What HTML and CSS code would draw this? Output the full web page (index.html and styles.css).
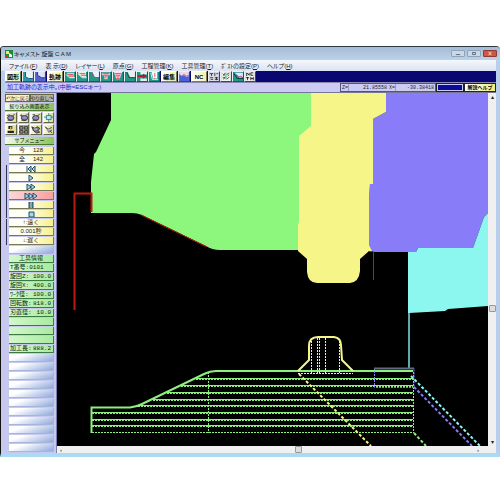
FILE: index.html
```html
<!DOCTYPE html>
<html lang="ja">
<head>
    <meta charset="UTF-8">
    <meta name="viewport" content="width=device-width, initial-scale=1.0">
    <title>キャメスト 旋盤 CAM</title>
    <link rel="stylesheet" href="styles.css">
</head>
<body>

<div class="window">
    <header class="title-bar">
        <svg class="app-icon" viewBox="0 0 8 8"><rect width="8" height="8" fill="#1c8a3c"/><path d="M1 1h3v3H1z" fill="#f5e663"/><path d="M4 7V3l3 2v2z" fill="#fff"/><path d="M1 5h2v2H1z" fill="#d33"/></svg>
        <h1>キャメスト 旋盤 C A M</h1>
        <div class="window-buttons">
            <button aria-label="最小化"><svg viewBox="0 0 12 7"><path d="M3 5h6" stroke="#445" /></svg></button>
            <button aria-label="最大化"><svg viewBox="0 0 12 7"><path d="M4 2h4v3h-4z" fill="none" stroke="#445"/></svg></button>
            <button class="close" aria-label="閉じる"><svg viewBox="0 0 12 7"><path d="M4 1l4 5M8 1l-4 5" stroke="#fff"/></svg></button>
        </div>
    </header>

    <nav class="menu-bar">
        <button>ファイル(<u>F</u>)</button>
        <button>表 示(<u>D</u>)</button>
        <button>レイヤー(<u>L</u>)</button>
        <button>原点(<u>G</u>)</button>
        <button>工程管理(<u>K</u>)</button>
        <button>工具管理(<u>T</u>)</button>
        <button>ﾎﾟｽﾄの設定(<u>P</u>)</button>
        <button>ヘルプ(<u>H</u>)</button>
    </nav>

    <div class="toolbar">
        <button class="tool-label">図形</button>
        <div class="tool-group">
            <button class="tool" aria-label="素材形状"><svg viewBox="0 0 12 11"><rect width="12" height="11" fill="#e8f4f4"/><path d="M0 0h3v6l4 2h5v3H0z" fill="#2a9aa8"/><path d="M3 0v6l4 2h5" fill="none" stroke="#123c7a"/></svg></button>
            <button class="tool" aria-label="加工形状"><svg viewBox="0 0 12 11"><rect width="12" height="11" fill="#dfe2f4"/><path d="M0 0h3v4l5 3h4v4H0z" fill="#5560d8"/><path d="M3 0v4l5 3h4" fill="none" stroke="#23247a"/></svg></button>
        </div>
        <button class="tool-label">軌跡</button>
        <div class="tool-group">
            <button class="tool" aria-label="外径荒"><svg viewBox="0 0 12 11"><rect width="12" height="11" fill="#1f9b88"/><path d="M2 1h9v6H7L3 4z" fill="#f4c4cc"/><path d="M3 3h7M5 5h6" stroke="#d8354d"/><path d="M1 3l4 4h7" fill="none" stroke="#fff"/></svg></button>
            <button class="tool" aria-label="内径荒"><svg viewBox="0 0 12 11"><rect width="12" height="11" fill="#1f9b88"/><path d="M1 0h10v6H6L2 3z" fill="#eed"/><path d="M3 2h7M5 4h6" stroke="#d8354d"/><path d="M1 2l5 5h6" fill="none" stroke="#fff"/></svg></button>
            <button class="tool" aria-label="端面"><svg viewBox="0 0 12 11"><rect width="12" height="11" fill="#1f9b88"/><path d="M4 0h8v6H7z" fill="#eef"/><path d="M4 1v3l3 3h5" fill="none" stroke="#d8354d"/></svg></button>
            <button class="tool" aria-label="溝荒"><svg viewBox="0 0 12 11"><rect width="12" height="11" fill="#1f9b88"/><path d="M1 1h10v3H8v5H4V4H1z" fill="#f4c4cc"/><path d="M2 2h8M4 4h4M5 6h2" stroke="#d8354d"/></svg></button>
            <button class="tool" aria-label="溝仕上"><svg viewBox="0 0 12 11"><rect width="12" height="11" fill="#1f9b88"/><path d="M1 0h10L8 9H4z" fill="#fde"/><path d="M2 2h8M3 4h6M4 6h4M4 8h4" stroke="#d8354d"/></svg></button>
            <button class="tool" aria-label="仕上"><svg viewBox="0 0 12 11"><rect width="12" height="11" fill="#1f9b88"/><path d="M3 0h9v6H6z" fill="#e9eeee"/><path d="M2 0l3 7h7" fill="none" stroke="#333"/></svg></button>
            <button class="tool" aria-label="穴あけ"><svg viewBox="0 0 12 11"><rect width="12" height="11" fill="#1f9b88"/><path d="M4 0h8v3H4zM4 8h8v3H4z" fill="#e8f0ee"/><path d="M1 5h7M7 3l3 2-3 2" fill="none" stroke="#b01830" stroke-width="2"/></svg></button>
            <button class="tool" aria-label="ねじ"><svg viewBox="0 0 12 11"><rect width="12" height="11" fill="#1f9b88"/><path d="M3 0h7v8H5z" fill="#fff"/><path d="M7 1v5M7 7v2" stroke="#d8354d"/><path d="M2 1l2 8h7" fill="none" stroke="#fff"/></svg></button>
        </div>
        <button class="tool-label">編集</button>
        <button class="tool" aria-label="軌跡編集"><svg viewBox="0 0 12 11"><rect width="12" height="11" fill="#e6d8ee"/><path d="M0 3l3 2 3-1 3 2 3-1v6H0z" fill="#4a62d8"/><path d="M0 3l3 2 3-2 3 2 3-1" fill="none" stroke="#d8456d"/></svg></button>
        <button class="tool-label">NC</button>
        <div class="tool-group">
            <button class="tool" aria-label="工具一覧"><svg viewBox="0 0 12 11"><rect width="12" height="11" fill="#dde"/><path d="M1 2h4M3 2v3M7 1v4M9 2h2M1 7h4M2 9h3M7 7h4M7 9h4M9 6v4" stroke="#222"/></svg></button>
            <button class="tool" aria-label="図面"><svg viewBox="0 0 12 11"><rect width="12" height="11" fill="#eef4ee"/><path d="M2 2l2 2M5 1l-2 4M7 3l3-2M8 5l2-2M2 7h3M3 9l2-3M7 9l3-3" stroke="#333"/><path d="M6 1v8" stroke="#2a9a78"/></svg></button>
            <button class="tool" aria-label="シミュレーション"><svg viewBox="0 0 12 11"><rect width="12" height="11" fill="#1f9b88"/><path d="M2 1h10v5L8 7z" fill="#dce8f4"/><path d="M2 3l3 1 2 2 3-1 2 2" fill="none" stroke="#a03a8a"/><path d="M1 2l4 6h7" fill="none" stroke="#123"/></svg></button>
            <button class="tool" aria-label="NC出力"><svg viewBox="0 0 12 11"><rect width="12" height="11" fill="#f4f4ee"/><path d="M2 5V1l3 3V1M10 1H7v3h3M1 7h4M3 6v4M7 6v4M7 8h3M10 6v4" fill="none" stroke="#111"/></svg></button>
        </div>
    </div>

    <div class="status-bar">
        <p class="status-message">加工軌跡の表示中。(中断=ESCキー)</p>
        <div class="position">
            <label for="posZ">Z=</label><output id="posZ">21.85558</output>
            <label for="posX">X=</label><output id="posX">-30.38418</output>
        </div>
        <div class="progress"></div>
        <button class="help-button">解説ヘルプ</button>
    </div>

    <main class="workspace">
        <aside class="sidebar">
            <div class="history">
                <button class="undo">↶次に戻る</button>
                <button class="redo">やり直し↷</button>
            </div>
            <h2 class="panel-title">絞り込み画面表示</h2>
            <div class="view-tools">
                <button aria-label="拡大"><svg viewBox="0 0 12 11"><ellipse cx="6" cy="6" rx="4" ry="3" fill="#8c8fc8" stroke="#223"/><path d="M1 3l4-1M8 4l3-3M2 9h6" stroke="#223"/></svg></button>
                <button aria-label="縮小"><svg viewBox="0 0 12 11"><ellipse cx="7" cy="6" rx="4" ry="3" fill="#8c8fc8" stroke="#223"/><path d="M9 3l2-2M3 9h6" stroke="#223"/><path d="M1 3h4M3 1v4" stroke="#d22"/></svg></button>
                <button aria-label="移動"><svg viewBox="0 0 12 11"><ellipse cx="6" cy="6" rx="4" ry="3" fill="#8c8fc8" stroke="#223"/><path d="M8 4l3-3M2 9h6M2 2h3" stroke="#223"/></svg></button>
                <button aria-label="全体"><svg viewBox="0 0 12 11"><path d="M3 3h6v5H3z" fill="#bde8ee" stroke="#178"/><path d="M6 0v3M6 8v3M0 5h3M9 5h3" stroke="#178"/></svg></button>
                <button aria-label="工具表示"><svg viewBox="0 0 12 11"><path d="M3 1h5v4H3zM2 7h8v3H2z" fill="#222"/><path d="M5 2h2v5H5z" fill="#d8b13c"/></svg></button>
                <button class="pressed" aria-label="格子"><svg viewBox="0 0 12 11"><path d="M1 2h4v3H1zM7 2h4v3H7zM1 7h4v3H1zM7 7h4v3H7z" fill="none" stroke="#222"/></svg></button>
                <button aria-label="チャック"><svg viewBox="0 0 12 11"><path d="M1 2l4 2 3-2 3 2-2 3 2 2-4 1-4-3z" fill="#778" stroke="#223"/><path d="M4 5h4" stroke="#fff"/></svg></button>
                <button aria-label="再描画"><svg viewBox="0 0 12 11"><path d="M1 2l4 3 5-2M3 3l3 6 4-3M6 5l4 5" fill="none" stroke="#223"/><circle cx="6" cy="6" r="2" fill="#aab"/></svg></button>
            </div>
            <h2 class="panel-title">サブメニュー</h2>
            <div class="rows">
                <div class="row cream counter"><span>今</span><span>128</span></div>
                <div class="row cream counter"><span>全</span><span>142</span></div>
                <div class="bracket">
                    <button class="row cream" aria-label="先頭へ"><svg viewBox="0 0 16 6"><path d="M4 0v6M8 0L5 3l3 3zM12 0L9 3l3 3z"/></svg></button>
                    <button class="row cream" aria-label="再生"><svg viewBox="0 0 16 6"><path d="M6 0l4 3-4 3z"/></svg></button>
                    <button class="row cream" aria-label="早送り"><svg viewBox="0 0 16 6"><path d="M4 0l4 3-4 3zM8 0l4 3-4 3z"/></svg></button>
                    <button class="row active" aria-label="最高速"><svg viewBox="0 0 16 6"><path d="M2 0l4 3-4 3zM6 0l4 3-4 3zM10 0l4 3-4 3z"/></svg></button>
                    <button class="row cream" aria-label="一時停止"><svg viewBox="0 0 16 6"><path d="M6 0h1v6H6zM9 0h1v6H9z"/></svg></button>
                    <button class="row cream" aria-label="停止"><svg viewBox="0 0 16 6"><path d="M6 1h5v5H6z"/></svg></button>
                </div>
                <div class="bracket">
                    <button class="row cream">↑:速く</button>
                    <div class="row cream">0.001秒</div>
                    <button class="row cream">↓:遅く</button>
                </div>
                <div class="row blank"></div>
                <h2 class="row green">工具情報</h2>
                <div class="row green info"><span>T番号:0101</span></div>
                <div class="row green info"><span>旋回Z:</span><span>100.0</span></div>
                <div class="row green info"><span>旋回X:</span><span>400.0</span></div>
                <div class="row green info"><span>ﾜｰｸ径:</span><span>100.0</span></div>
                <div class="row green info"><span>回転数:</span><span>818.0</span></div>
                <div class="row green info"><span>刃直径:</span><span>10.0</span></div>
                <div class="row green"></div>
                <div class="row green"></div>
                <div class="row green"></div>
                <div class="row green info"><span>加工長:</span><span>888.2</span></div>
                <div class="row blank"></div>
                <div class="row blank"></div>
                <div class="row blank"></div>
                <div class="row blank"></div>
                <div class="row blank"></div>
                <div class="row blank"></div>
                <div class="row blank"></div>
                <div class="row blank"></div>
                <div class="row blank"></div>
                <div class="row blank"></div>
                <div class="row blank"></div>
            </div>
        </aside>

        <section class="view">
            <svg class="drawing" viewBox="57 93 431 353">
                <!-- Swept tool areas -->
                <path fill="#8cf77c" d="M111 93V120L96 152L94 154L91 182V213H132Q137 213 142 215L206 246Q212 250 220 250H300L312 130V93z"/>
                <path fill="#887cf8" d="M386 93V112L373 119V184H370L369 200V246L372 252H416L418 248H473L484 217L488 213V93z"/>
                <path fill="#f5f588" d="M311 93V126L299 136V222L298 225V251L307 259V272Q308 283 317 283H350Q359 282 360 271V259L369 251L372 251L369 245V200L370 184H373V119L386 112V93z"/>
                <path fill="#8cf7ee" d="M408 252H416L418 248H473L484 217L488 213V306L448 309L445 311L409 313H408z"/>
                <path class="line teal" d="M409 313V368"/>

                <!-- Rapid moves -->
                <path class="line red" d="M74.500 310V193.500H91.500V212"/>
                <path class="line red thin" d="M141 215L207 247M368 251.500H373.500V280"/>

                <!-- Roughing passes -->
                <path class="line green" d="M91.500 433V407.500H130Q136 407 142 404L204 374Q210 371 216 371H413"/>
                <path class="line green thin" d="M196 378.500H413M181 385.500H413M167 392.500H413M153 399.500H413M138 405.500H413M92 412.500H413M92 419.500H413M92 425.500H413"/>
                <path class="line green dash" d="M196 379.500H413M181 386.500H413M167 393.500H413M153 400.500H413M138 406.500H413M92 413.500H413M92 420.500H413M92 426.500H413M92 432.500H413M208.500 372V433M413.500 372V433"/>
                <path class="line green dash travel" d="M414 433L426 446"/>

                <!-- Grooving tool -->
                <path class="line yellow" d="M298 371L309 360V346Q309 337 318 337H334Q341 338 341 345L342 360L353 371"/>
                <path class="line yellow dash" d="M298 373.500H353M311.500 341V373M317.500 338V373M319.500 338V373M325.500 338V373M339.500 341V373"/>
                <path class="line yellow dash travel" d="M299 374L371 446"/>

                <!-- Finishing and threading -->
                <path class="line violet dash" d="M374.500 368V387.500H414V368"/>
                <path class="line violet dash travel" d="M414 387L472 446"/>
                <path class="line slate" d="M374 368.500H414"/>
                <path class="line cyan dash travel" d="M411 376L480 446"/>
            </svg>
            <div class="scroll-y"><span>▴</span><i class="thumb"></i><span>▾</span></div>
            <div class="scroll-x"><span>‹</span><i class="thumb"></i><span>›</span></div>
        </section>
    </main>
</div>

</body>
</html>
```
FILE: styles.css
```css
* {
    box-sizing: border-box;
}

body {
    margin: 0;
    background: #fff;
    font-family: "Liberation Sans", "Noto Sans CJK JP", sans-serif;
    font-size: 6px;
    line-height: 8px;
    color: #222;
}

button {
    margin: 0;
    padding: 0;
    border: none;
    background: none;
    font: inherit;
    color: inherit;
    cursor: pointer;
    white-space: nowrap;
}

h1, h2, p {
    margin: 0;
    font-size: inherit;
    font-weight: normal;
}

svg {
    display: block;
}

.window {
    margin-top: 46px;
    border-top: 1px solid #30383f;
    border-left: 1px solid #111;
    border-bottom: 4px solid #a9dcf4;
    border-radius: 4px 4px 0 0;
    background: #b9cdec;
    overflow: hidden;
}

/* Title and menu */
.title-bar {
    display: flex;
    align-items: center;
    height: 13px;
    padding: 0 3px 0 4px;
    gap: 1px;
    background: linear-gradient(#a4bcd6, #bcd2e8);
    font-feature-settings: "palt";
}

.app-icon {
    width: 8px;
    height: 8px;
}

.title-bar h1 {
    flex: 1;
}

.window-buttons {
    display: flex;
    gap: 2px;
}

.window-buttons button {
    width: 14px;
    height: 7px;
    border: 1px solid #8fa3bb;
    border-radius: 1px;
    background: #c9d9ea;
}

.window-buttons svg {
    width: 12px;
    height: 5px;
}

.window-buttons .close {
    border-color: #8c3a32;
    background: #d2553f;
}

.menu-bar {
    display: flex;
    gap: 8px;
    height: 11px;
    margin-right: 4px;
    padding: 0 8px;
    background: linear-gradient(#f4f7fc, #dbe2f1);
    font-feature-settings: "palt";
}

/* Toolbar */
.toolbar {
    display: flex;
    gap: 1px;
    height: 12px;
    margin: 0 4px;
    background: #0b0770;
    border-bottom: 1px solid #8a8ab0;
}

.tool-group {
    display: flex;
}

.tool-label {
    width: 16px;
    height: 11px;
    border: 1px solid #77775a;
    border-top-color: #fff;
    border-left-color: #fff;
    background: linear-gradient(90deg, #fff, #f3f3a8);
    color: #000;
    font-weight: bold;
    line-height: 8px;
}

.tool {
    width: 12px;
    height: 11px;
    border: 1px solid #445;
    border-top-color: #eee;
    border-left-color: #eee;
}

.tool svg {
    width: 100%;
    height: 100%;
}

/* Status */
.status-bar {
    display: flex;
    height: 10px;
    margin: 0 4px;
    background: #cbcbf4;
    border-bottom: 1px solid #77779a;
}

.status-message {
    flex: 1;
    padding-left: 2px;
    color: #2222c8;
    font-feature-settings: "palt";
}

.position {
    display: flex;
    width: 96px;
    border: 1px solid #55557a;
    font-family: "Liberation Mono", monospace;
    font-size: 5px;
}

.position label {
    width: 8px;
    padding-left: 1px;
    border-right: 1px solid #9a9ac4;
}

.position output {
    flex: 1;
    padding-right: 1px;
    text-align: right;
}

.progress {
    width: 28px;
    border: 1px solid #222;
    outline: 1px solid #cbcbf4;
    outline-offset: -2px;
    background: #0a0a9c;
}

.help-button {
    width: 32px;
    border: 1px solid #222;
    background: linear-gradient(90deg, #fff, #f0f07a);
    font-weight: bold;
    font-size: 5px;
    line-height: 7px;
    color: #000;
}

/* Sidebar */
.workspace {
    display: flex;
    align-items: stretch;
    margin-right: 4px;
}

.sidebar {
    width: 56px;
    padding: 1px 2px 1px 4px;
    border-right: 1px solid #7c7cae;
    background: #c6c8ee;
    color: #222;
}

.history {
    display: grid;
    grid-template-columns: 1fr 1fr;
    height: 8px;
    margin-bottom: 1px;
    font-size: 5px;
    line-height: 6px;
    font-feature-settings: "palt";
}

.history button {
    border: 1px solid #66664a;
    overflow: hidden;
}

.undo {
    background: #f7f7ae;
    color: #6a1a8a;
}

.redo {
    background: #b4b4a0;
}

.panel-title {
    height: 8px;
    border-bottom: 1px solid #4c7a2c;
    background: linear-gradient(90deg, #f2fae8, #8cc25a);
    text-align: center;
    font-size: 5px;
    line-height: 7px;
    color: #000;
}

.view-tools {
    display: grid;
    grid-template-columns: repeat(4, 1fr);
    gap: 1px;
    margin: 1px 0 2px;
}

.view-tools button {
    height: 11px;
    border: 1px solid #66664a;
    border-top-color: #fff;
    border-left-color: #fff;
    background: linear-gradient(90deg, #fbfbe0, #dcdc90);
}

.view-tools .pressed {
    background: #a4a494;
}

.view-tools svg {
    width: 100%;
    height: 100%;
}

.rows,
.bracket {
    display: grid;
    gap: 1px;
}

.rows {
    margin-top: 2px;
    padding-left: 4px;
}

.bracket {
    margin-left: -3px;
    padding-left: 2px;
    border-left: 1px solid #33335a;
}

.row {
    display: flex;
    align-items: center;
    justify-content: center;
    height: 8px;
    border-bottom: 1px solid #77775a;
    border-right: 1px solid #77775a;
    line-height: 7px;
    white-space: nowrap;
}

.row svg {
    width: 16px;
    height: 6px;
    fill: #9cdcec;
    stroke: #234a66;
    stroke-width: 1;
}

.cream {
    background: linear-gradient(90deg, #fffff4 40%, #f7f08a);
}

.active {
    background: linear-gradient(90deg, #fbd8d8, #f7a0a0);
}

.counter {
    gap: 8px;
}

.green {
    border-color: #3c7a44;
    background: linear-gradient(90deg, #d4f7cc, #a8eba0);
    color: #052a0a;
}

.info {
    justify-content: space-between;
    padding: 0 2px 0 1px;
    font-family: "Liberation Mono", "Noto Sans CJK JP", monospace;
}

.blank {
    border-color: #a9b4dc;
    background: linear-gradient(160deg, #fff 25%, #8fa9dc);
}

/* Drawing area */
.view {
    flex: 1;
    display: grid;
    grid-template-columns: 1fr 8px;
    grid-template-rows: 1fr 7px;
    background: #f0f0f0;
}

.drawing {
    width: 100%;
    background: #000;
}

.scroll-y,
.scroll-x {
    display: grid;
    align-items: center;
    background: #f0f0f0;
    line-height: 6px;
}

.scroll-y {
    grid-template-rows: 8px 5fr 3fr 8px;
    justify-items: center;
}

.scroll-y .thumb {
    align-self: end;
}

.scroll-y span:last-child {
    grid-row: 4;
}

.scroll-x {
    grid-template-columns: 8px 4fr 3fr 8px;
    padding: 0 3px;
}

.scroll-x .thumb {
    justify-self: end;
}

.scroll-x span:last-child {
    grid-column: 4;
}

.thumb {
    width: 7px;
    height: 7px;
    border: 1px solid #999;
    border-radius: 1px;
    background: #ddd;
}

.line {
    fill: none;
    stroke-width: 2;
}

.thin {
    stroke-width: 1;
}

.dash {
    stroke-width: 1;
    stroke-dasharray: 2 1;
}

.travel {
    stroke-width: 2;
    stroke-dasharray: 3 2;
}

.red {
    stroke: #c01a10;
}

.line.green {
    background: none;
    stroke: #8cf07c;
}

.teal {
    stroke: #5cabaa;
}

.yellow {
    stroke: #f5f588;
}

.violet {
    stroke: #887cf8;
}

.slate {
    stroke: #666688;
}

.cyan {
    stroke: #8cf7ee;
}
```
